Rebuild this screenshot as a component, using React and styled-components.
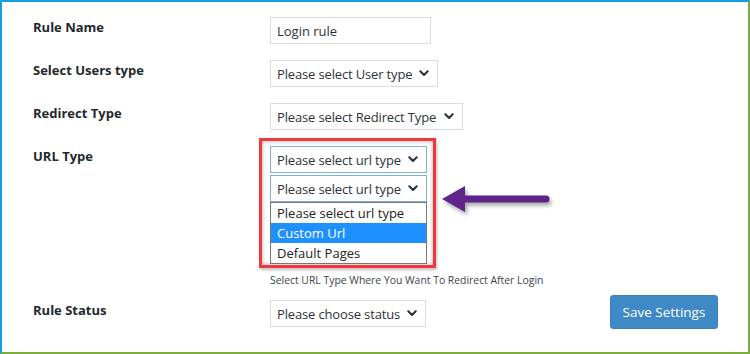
import React from "react";
import styled, { createGlobalStyle } from "styled-components";

const GlobalStyle = createGlobalStyle`
  html, body { margin: 0; padding: 0; background: #ffffff; }
  body { font-family: "Open Sans", "Noto Sans", Arial, sans-serif; }
  * { box-sizing: border-box; }
`;

const Frame = styled.div`
  position: relative;
  width: 750px;
  height: 354px;
  border-top: 2px solid #12a0e3;
  border-left: 2px solid #12a0e3;
  border-right: 2px solid #7aad3b;
  border-bottom: 2px solid #7aad3b;
  padding: 15px 30px 0 31px;
  background: #fff;
  display: flex;
  flex-direction: column;
`;

const Row = styled.div`
  display: flex;
  align-items: flex-start;
  margin-top: ${(p) => p.$gap ?? 16}px;
  &:first-child { margin-top: 0; }
`;

const Label = styled.div`
  width: 237px;
  flex: none;
  margin-top: 1px;
  font-size: 13px;
  line-height: 18px;
  font-weight: 700;
  color: #23282d;
`;

const Control = styled.div`
  display: flex;
  flex-direction: column;
`;

const TextInput = styled.div`
  width: ${(p) => p.$w}px;
  height: 27px;
  border: 1px solid #dcdcde;
  padding: 0 6px;
  display: flex;
  align-items: center;
  font-size: 13px;
  line-height: 18px;
  color: #2c3338;
  background: #fff;
`;

const SelectBox = styled.div`
  width: ${(p) => p.$w}px;
  height: 27px;
  border: 1px solid ${(p) => (p.$focus ? "#7fb1e3" : "#dcdcde")};
  padding: 0 8px 0 6px;
  margin-top: ${(p) => p.$mt || 0}px;
  display: flex;
  align-items: center;
  justify-content: space-between;
  font-size: 13px;
  line-height: 18px;
  letter-spacing: -0.15px;
  color: #2c3338;
  background: #fff;
  white-space: nowrap;
`;

const Chevron = () => (
  <svg width="10" height="7" viewBox="0 0 10 7">
    <path d="M1.3 1.3 L5 5 L8.7 1.3" fill="none" stroke="#2c3338" strokeWidth="2.1" strokeLinecap="round" strokeLinejoin="round" />
  </svg>
);

const Select = ({ w, focus, mt, children }) => (
  <SelectBox $w={w} $focus={focus} $mt={mt}>
    <span>{children}</span>
    <Chevron />
  </SelectBox>
);

const Highlight = styled.div`
  margin: -8px 0 0 -11px;
  width: 177px;
  border: 3px solid #f0393f;
  padding: 5px 6px 1px 8px;
  background: #fff;
  box-shadow: inset 0 0 4px rgba(0, 0, 0, 0.35), 1px 2px 3px rgba(0, 0, 0, 0.25);
`;

const OptionList = styled.div`
  width: 157px;
  border: 1px solid #767676;
  background: #fff;
`;

const Option = styled.div`
  height: 20px;
  padding: 0 6px;
  font-size: 13px;
  line-height: 20px;
  color: ${(p) => (p.$active ? "#fff" : "#222")};
  background: ${(p) => (p.$active ? "#1e90ff" : "#fff")};
`;

const Help = styled.div`
  margin-top: 5px;
  font-size: 10.4px;
  line-height: 14px;
  color: #3c434a;
  white-space: nowrap;
`;

const SaveButton = styled.button`
  margin: -5px 0 0 auto;
  width: 108px;
  height: 34px;
  border: 1px solid #3a7fbb;
  border-radius: 3px;
  background: #3f89c7;
  color: #fff;
  font-family: "Open Sans", "Noto Sans", Arial, sans-serif;
  font-size: 13.5px;
  padding: 0;
`;

const Arrow = styled.svg`
  position: absolute;
  left: 434px;
  top: 176px;
  filter: drop-shadow(2px 3px 2px rgba(0, 0, 0, 0.35));
`;

export default function App() {
  return (
    <>
      <GlobalStyle />
      <Frame>
        <Row>
          <Label>Rule Name</Label>
          <TextInput $w={161}>Login rule</TextInput>
        </Row>
        <Row>
          <Label>Select Users type</Label>
          <Select w={168}>Please select User type</Select>
        </Row>
        <Row>
          <Label>Redirect Type</Label>
          <Select w={193}>Please select Redirect Type</Select>
        </Row>
        <Row>
          <Label>URL Type</Label>
          <Control>
            <Highlight>
              <Select w={157} focus>Please select url type</Select>
              <Select w={157} focus mt={2}>Please select url type</Select>
              <OptionList>
                <Option>Please select url type</Option>
                <Option $active>Custom Url</Option>
                <Option>Default Pages</Option>
              </OptionList>
            </Highlight>
            <Help>Select URL Type Where You Want To Redirect After Login</Help>
          </Control>
        </Row>
        <Row $gap={13}>
          <Label>Rule Status</Label>
          <Select w={156}>Please choose status</Select>
          <SaveButton>Save Settings</SaveButton>
        </Row>
        <Arrow width="120" height="42" viewBox="0 0 120 42">
          <line x1="26" y1="21" x2="110" y2="21" stroke="#5f2489" strokeWidth="7" strokeLinecap="round" />
          <polygon points="6,21 29,8 29,34" fill="#5f2489" />
        </Arrow>
      </Frame>
    </>
  );
}
